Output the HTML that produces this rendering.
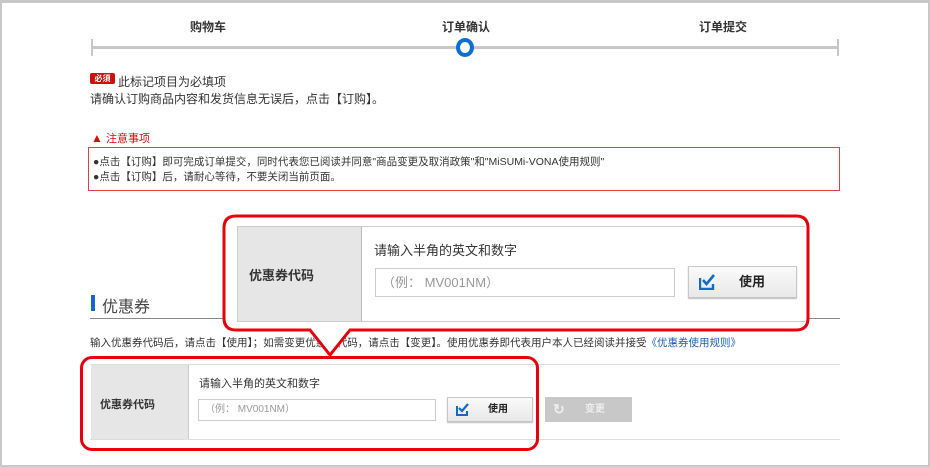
<!DOCTYPE html>
<html><head><meta charset="utf-8"><style>
*{margin:0;padding:0;box-sizing:border-box}
body{width:930px;height:467px;position:relative;overflow:hidden;background:#fff;font-family:"Liberation Sans","Noto Sans CJK SC",sans-serif;color:#333}
.a{position:absolute}
.frame{left:0;top:0;width:930px;height:467px;border:2px solid #c8c8c8;border-top-width:3px}
.s{font-size:12px;white-space:nowrap}
.btn{background:linear-gradient(#fafafa,#e8e8e8);border:1px solid #c8c8c8;box-shadow:0 1px 1px #bbb;font-weight:bold;color:#222}
</style></head><body>
<div class="a frame"></div>
<div class="a s" style="left:190px;top:18px;font-weight:bold;color:#333">购物车</div>
<div class="a s" style="left:442px;top:18px;font-weight:bold;color:#333">订单确认</div>
<div class="a s" style="left:699px;top:18px;font-weight:bold;color:#333">订单提交</div>
<div class="a" style="left:92px;top:46px;width:746px;height:3px;background:#c8c8c8"></div>
<div class="a" style="left:91px;top:39px;width:2px;height:17px;background:#c8c8c8"></div>
<div class="a" style="left:837px;top:39px;width:2px;height:17px;background:#c8c8c8"></div>
<div class="a" style="left:456px;top:38px;width:18px;height:19px;border:4px solid #0a6fd6;border-radius:50%;background:#fff"></div>

<div class="a" style="left:90px;top:73px;width:25px;height:11px;background:#d01010;border-radius:2px;color:#fff;font-size:8px;line-height:11px;text-align:center;font-weight:bold">必須</div>
<div class="a s" style="left:118px;top:73px;font-size:12px">此标记项目为必填项</div>
<div class="a s" style="left:90px;top:90px;font-size:12px">请确认订购商品内容和发货信息无误后，点击【订购】。</div>

<div class="a s" style="left:91px;top:130px;color:#d01010;font-size:11px"><span style="font-size:12px">▲</span> 注意事项</div>
<div class="a" style="left:88px;top:147px;width:752px;height:44px;border:1px solid #e04040"></div>
<div class="a s" style="left:93px;top:155px;font-size:10.5px;line-height:15px">●点击【订购】即可完成订单提交，同时代表您已阅读并同意"商品变更及取消政策"和"MiSUMi-VONA使用规则"<br>●点击【订购】后，请耐心等待，不要关闭当前页面。</div>

<div class="a" style="left:91px;top:295px;width:4px;height:16px;background:#1468c8"></div>
<div class="a" style="left:102px;top:293px;font-size:16px;color:#444">优惠券</div>
<div class="a" style="left:90px;top:318px;width:750px;height:1px;background:#888"></div>
<div class="a s" style="left:90px;top:335px;font-size:10.5px">输入优惠券代码后，请点击【使用】；如需变更优惠券代码，请点击【变更】。使用优惠券即代表用户本人已经阅读并接受<span style="color:#1a5fc0">《优惠券使用规则》</span></div>

<div class="a" style="left:90px;top:364px;width:750px;height:76px;border:1px solid #ddd;border-left:none;border-right:none"></div>
<div class="a" style="left:91px;top:365px;width:98px;height:74px;background:#e6e6e6;border-right:1px solid #ccc"></div>
<div class="a s" style="left:100px;top:396px;font-size:11px;font-weight:bold">优惠券代码</div>
<div class="a s" style="left:199px;top:375px;font-size:11px">请输入半角的英文和数字</div>
<div class="a" style="left:198px;top:399px;width:238px;height:22px;border:1px solid #ccc;font-size:10px;color:#999;line-height:20px;padding-left:6px">（例： MV001NM）</div>
<div class="a btn" style="left:447px;top:397px;width:86px;height:25px;font-size:10px;line-height:23px">
<svg style="position:absolute;left:8px;top:5px" width="13" height="13" viewBox="0 0 13 13"><path d="M1 3 V12 H11 V8" fill="none" stroke="#1468c8" stroke-width="2"/><path d="M3 5 L6 8 L12 1" fill="none" stroke="#1468c8" stroke-width="2.2"/></svg>
<span style="position:absolute;left:40px">使用</span></div>
<div class="a" style="left:545px;top:397px;width:87px;height:25px;background:#c8c8c8;color:#eee;font-size:10px;line-height:25px;font-weight:bold"><span style="position:absolute;left:8px;font-size:14px">↻</span><span style="position:absolute;left:40px">变更</span></div>
<div class="a" style="left:80px;top:356px;width:459px;height:95px;border:3px solid #e8000a;border-radius:12px"></div>

<svg class="a" style="left:0;top:0" width="930" height="467">
<path d="M236 216 H796 Q808 216 808 228 V318 Q808 330 796 330 H350 L330 355 L310 330 H236 Q224 330 224 318 V228 Q224 216 236 216 Z" fill="#fff" stroke="#e8000a" stroke-width="3"/>
</svg>
<div class="a" style="left:237px;top:226px;width:568px;height:96px;border:1px solid #ccc;border-right:none"></div>
<div class="a" style="left:238px;top:227px;width:124px;height:94px;background:#e6e6e6;border-right:1px solid #bbb"></div>
<div class="a s" style="left:249px;top:265px;font-size:13px;font-weight:bold">优惠券代码</div>
<div class="a s" style="left:374px;top:240px;font-size:13px">请输入半角的英文和数字</div>
<div class="a" style="left:375px;top:268px;width:300px;height:29px;border:1px solid #ccc;font-size:13px;color:#999;line-height:27px;padding-left:6px">（例： MV001NM）</div>
<div class="a btn" style="left:688px;top:266px;width:109px;height:32px;font-size:13px;line-height:30px">
<svg style="position:absolute;left:10px;top:7px" width="16" height="16" viewBox="0 0 16 16"><path d="M1 4 V15 H14 V10" fill="none" stroke="#1468c8" stroke-width="2.4"/><path d="M4 6 L7.5 10 L15 1" fill="none" stroke="#1468c8" stroke-width="2.6"/></svg>
<span style="position:absolute;left:50px">使用</span></div>
</body></html>
